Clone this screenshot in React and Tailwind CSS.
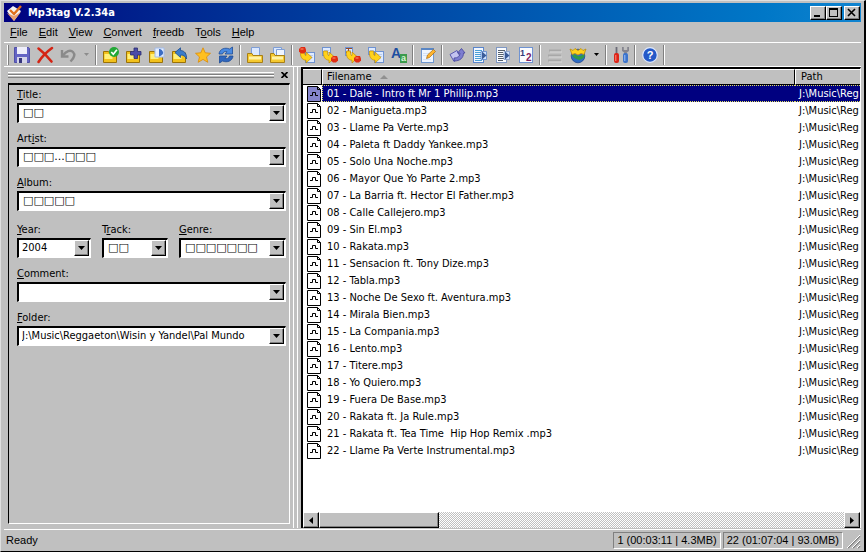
import React from 'react';

const tracks = [
  '01 - Dale - Intro ft Mr 1 Phillip.mp3',
  '02 - Manigueta.mp3',
  '03 - Llame Pa Verte.mp3',
  '04 - Paleta ft Daddy Yankee.mp3',
  '05 - Solo Una Noche.mp3',
  '06 - Mayor Que Yo Parte 2.mp3',
  '07 - La Barria ft. Hector El Father.mp3',
  '08 - Calle Callejero.mp3',
  '09 - Sin El.mp3',
  '10 - Rakata.mp3',
  '11 - Sensacion ft. Tony Dize.mp3',
  '12 - Tabla.mp3',
  '13 - Noche De Sexo ft. Aventura.mp3',
  '14 - Mirala Bien.mp3',
  '15 - La Compania.mp3',
  '16 - Lento.mp3',
  '17 - Titere.mp3',
  '18 - Yo Quiero.mp3',
  '19 - Fuera De Base.mp3',
  '20 - Rakata ft. Ja Rule.mp3',
  '21 - Rakata ft. Tea Time  Hip Hop Remix .mp3',
  '22 - Llame Pa Verte Instrumental.mp3',
];

// [before, underlined letter, after]
const menus = [
  ['', 'F', 'ile'],
  ['', 'E', 'dit'],
  ['', 'V', 'iew'],
  ['', 'C', 'onvert'],
  ['', 'f', 'reedb'],
  ['T', 'o', 'ols'],
  ['', 'H', 'elp'],
];

const Folder = () => (
  <>
    <path d="M.5 4.500h5l1 1.500h7v9.500H.5z" fill="#f2c11c" stroke="#9a7208" />
    <path d="M1.500 7h8v5h-8z" fill="#fff07a" />
  </>
);

const Page = ({ x = 6, y = 5, w = 9, h = 10 }) => (
  <>
    <rect x={x + 0.5} y={y + 0.5} width={w} height={h} fill="#dfebff" stroke="#6f93d2" />
    <path d={`M${x + 2} ${y + 3.5}h${w - 3}M${x + 2} ${y + 5.5}h${w - 3}`} stroke="#b7ccf0" />
  </>
);

const Tag = ({ x, y }) => (
  <>
    <path d={`M${x} ${y + 1}l2-2h4l1 2.500v2l-2 2h-3l-2-2z`} fill="#e02c14" />
    <path d={`M${x + 1.5} ${y + 1}h3`} stroke="#ff9a70" />
  </>
);

const Curve = () => (
  <path d="M1.500 4C1 10 3 13 7 13.200V16l6-5.500L7 5v3.500C5.800 8.300 5.300 7 5.500 4z" fill="#ffd21a" stroke="#c08a08" strokeWidth=".7" />
);

const icons = {
  save: (
    <>
      <path d="M.5.5h14l1 1v14H.5z" fill="#6464c4" stroke="#5050a8" />
      <path d="M3 0h10v7H3z" fill="#eeeefa" />
      <path d="M3 10h10v6H3z" fill="#d4d4e8" />
      <path d="M5 11h3v5H5z" fill="#36367e" />
    </>
  ),
  remove: (
    <path d="M1.500 1.500c4 3 9 8 13 13M15 1C9.500 5 5 9.500 1.500 15" fill="none" stroke="#d42414" strokeWidth="2.600" strokeLinecap="round" />
  ),
  undo: (
    <>
      <path d="M2 3v6.500h6.500" fill="none" stroke="#8a8a8a" strokeWidth="2.400" />
      <path d="M3 8.500C6 4 10.500 2.500 13 5s1 6-2.500 9.500" fill="none" stroke="#8a8a8a" strokeWidth="2.400" />
    </>
  ),
  folderCheck: (
    <>
      <Folder />
      <circle cx="11" cy="5" r="5" fill="#22a836" />
      <path d="M8.300 5l2 2.200 3.600-4.400" fill="none" stroke="#fff" strokeWidth="1.700" />
    </>
  ),
  folderAdd: (
    <>
      <Folder />
      <path d="M8 1h3.500v3.500H15V8h-3.500v3.500H8V8H4.500V4.500H8z" fill="#4a4ca8" stroke="#2a2c70" strokeWidth=".8" />
    </>
  ),
  folderPlay: (
    <>
      <Folder />
      <path d="M6 1h9v9H6z" fill="#e4eeff" stroke="#a3bbe8" />
      <path d="M10 2v7.500c3.500-1 4.500-3 4-4.500S12.500 2 10 2z" fill="#3a6cc4" />
    </>
  ),
  folderUp: (
    <>
      <Folder />
      <path d="M3 5.500L8.500.8v2.700c4 0 6.500 3.500 6 8.500-1.500-3-3-4-6-4v2.500z" fill="#3b7cc9" stroke="#1d4d90" strokeWidth=".8" />
    </>
  ),
  star: (
    <path d="M8 .8l2.200 5 5.300.5-4 3.600 1.300 5.400L8 12.400l-4.800 2.900 1.300-5.400-4-3.600 5.300-.5z" fill="#ffc020" stroke="#dc9010" strokeWidth=".9" />
  ),
  refresh: (
    <>
      <path d="M1 7C1.500 2 7 0 11.500 2L14.500 0v7H7l2-2.300C7 4 5 5 4.500 7z" fill="#4a8ae0" stroke="#1c4b98" strokeWidth=".8" />
      <path d="M15 9c-.5 5-6 7-10.500 5l-3 2V9H9l-2 2.300c2 .7 4 0 4.500-2.300z" fill="#2f66bd" stroke="#1c4b98" strokeWidth=".8" />
    </>
  ),
  openFile: (
    <>
      <path d="M4.500.5h8v8h-8z" fill="#dce9ff" stroke="#7f9fd6" />
      <path d="M.5 6.500H5l1 2h9.500v7H.5z" fill="#f5c930" stroke="#a97f14" />
      <path d="M2 9.500h12v3H2z" fill="#fff2a6" />
    </>
  ),
  openFiles: (
    <>
      <path d="M3.500.5h8v8h-8z" fill="#dce9ff" stroke="#7f9fd6" />
      <path d="M6.500 2.500h8v8h-8z" fill="#eef4ff" stroke="#7f9fd6" />
      <path d="M.5 6.500H4l1 2h9.500v7H.5z" fill="#f5c930" stroke="#a97f14" />
      <path d="M2 9.500h11v3H2z" fill="#fff2a6" />
    </>
  ),
  tagToFile: (
    <>
      <Page />
      <Curve />
      <Tag x={0} y={1} />
    </>
  ),
  fileToTag: (
    <>
      <Page x={0} y={0} w={8} h={8} />
      <Curve />
      <Tag x={9} y={10} />
    </>
  ),
  textToTag: (
    <>
      <Page x={0} y={0} w={7} h={8} />
      <path d="M1 1.500h6M3.500 2v3M1 5.500h5" stroke="#9a4a20" />
      <Curve />
      <Tag x={9} y={10} />
    </>
  ),
  fileToFile: (
    <>
      <Page x={0} y={0} w={7} h={7} />
      <Page x={6} y={4} w={9} h={11} />
      <Curve />
    </>
  ),
  letters: (
    <>
      <text x="0" y="11" fontSize="14" fontWeight="bold" fontFamily="Liberation Sans" fill="#1d4ea0">A</text>
      <rect x="9" y="7" width="7" height="9" fill="#3b9a4c" />
      <text x="10" y="14" fontSize="9" fontWeight="bold" fontFamily="Liberation Sans" fill="#d9f5d9">a</text>
    </>
  ),
  edit: (
    <>
      <rect x="1.500" y="1.500" width="12" height="14" fill="#eef5ff" stroke="#6f97d0" />
      <path d="M1 2h13" stroke="#5a86c4" strokeWidth="2" />
      <path d="M3 6.500h6M3 8.500h5M3 12.500h8" stroke="#d4e2f6" />
      <path d="M6.500 11.500l1-3.500 6-5.500 2 2-6 6z" fill="#ffb52e" stroke="#a86a10" strokeWidth=".7" />
    </>
  ),
  send: (
    <>
      <path d="M1 7.500l7-4 3 6-6 5z" fill="#c4c4f0" stroke="#5a5ab0" />
      <path d="M5 11c4 0 6-2 6-5H8.500L12.500 1.500 16 6h-1.500c0 5-3.500 8-9.500 8z" fill="#7d7dd0" stroke="#44449a" strokeWidth=".8" />
    </>
  ),
  export: (
    <>
      <rect x="1.500" y=".5" width="10" height="15" fill="#f2f7ff" stroke="#5b86cc" />
      <path d="M3 3.500h7M3 5.500h7M3 7.500h7M3 9.500h7M3 11.500h7M3 13.500h7" stroke="#4b9fd6" />
      <path d="M9 4.500h5.500v8H9z" fill="#cfe2ff" stroke="#5b86cc" strokeWidth=".8" />
      <path d="M10 4.500l4.500 4-4.500 4z" fill="#3a5c98" />
    </>
  ),
  exportPlain: (
    <>
      <rect x="1.500" y=".5" width="10" height="15" fill="#fafcff" stroke="#7f98c4" />
      <path d="M3 3.500h7M3 5.500h5M3 7.500h7M3 9.500h5M3 11.500h7M3 13.500h5" stroke="#55606e" />
      <path d="M9 4.500h5.500v8H9z" fill="#cfe2ff" stroke="#7f98c4" strokeWidth=".8" />
      <path d="M10 4.500l4.500 4-4.500 4z" fill="#3a5c98" />
    </>
  ),
  number: (
    <>
      <rect x="1.500" y=".5" width="13" height="15" fill="#fbfcff" stroke="#6f93d2" />
      <text x="2" y="9" fontSize="9" fontWeight="bold" fontFamily="Liberation Sans" fill="#333a78">1</text>
      <text x="8" y="14" fontSize="10" fontWeight="bold" fontFamily="Liberation Sans" fill="#802060">2</text>
    </>
  ),
  disabled: (
    <>
      <path d="M2 3.500h12M1 8.500h13M1 13.500h13" stroke="#a8a8a8" strokeWidth="2" />
      <path d="M3 5h12M2 10h13M2 15h13" stroke="#d8d8d8" />
    </>
  ),
  globe: (
    <>
      <circle cx="8" cy="9" r="6.800" fill="#2f6cc4" stroke="#1a3f86" strokeWidth=".7" />
      <path d="M2 8c2-1 4 0 6 1s4-2 6.500-1c0 3-2.500 4-5 5C6 12 3 11 2 8z" fill="#2f9a4a" />
      <path d="M0 2l3 1.500L5 1.500l3 2 3-2 2 2L16 2l-2 5.500-3-1-3 1.500-3-1.500-3 1z" fill="#ffd21a" stroke="#b88a10" strokeWidth=".8" />
    </>
  ),
  tools: (
    <>
      <path d="M3.500 0v7" stroke="#6c6c78" strokeWidth="1.800" />
      <rect x="1" y="6" width="5" height="10" rx="2" fill="#dd2418" />
      <path d="M2.800 8v6" stroke="#ff9080" />
      <path d="M9 0v4l2.200 1.500V7h2.600V5.500L16 4V0l-1.800 0v3h-3.400V0z" fill="#85858f" />
      <rect x="10" y="6" width="5" height="10" rx="2" fill="#3c74cc" />
      <path d="M11.800 8v6" stroke="#a0c4f8" />
    </>
  ),
  help: (
    <>
      <circle cx="8" cy="8" r="7.300" fill="#2459c8" stroke="#dfe8fa" strokeWidth="1.200" />
      <text x="8" y="12" fontSize="11" textAnchor="middle" fontWeight="bold" fontFamily="Liberation Sans" fill="#fff">?</text>
    </>
  ),
};

const toolbarGroups = [
  ['save', 'remove', 'undo', 'menuOff'],
  ['folderCheck', 'folderAdd', 'folderPlay', 'folderUp', 'star', 'refresh'],
  ['openFile', 'openFiles'],
  ['tagToFile', 'fileToTag', 'textToTag', 'fileToFile', 'letters'],
  ['edit'],
  ['send', 'export', 'exportPlain', 'number'],
  ['disabled', 'globe', 'menu'],
  ['tools'],
  ['help'],
];

const raised = 'bg-[#c0c0c0] border border-t-white border-l-white border-r-black border-b-black shadow-[inset_-1px_-1px_0_#808080]';

const ToolButton = ({ name }) => {
  if (name === 'menu' || name === 'menuOff') {
    return (
      <button aria-label={name} className="w-[14px] h-[22px] flex items-center justify-center">
        <svg width="5" height="3" viewBox="0 0 5 3">
          <path d="M0 0h5L2.500 3z" fill={name === 'menu' ? '#000' : '#8c8c8c'} />
        </svg>
      </button>
    );
  }
  return (
    <button aria-label={name} className="w-[23px] h-[22px] flex items-center justify-center">
      <svg width="16" height="16" viewBox="0 0 16 16" className="overflow-visible">{icons[name]}</svg>
    </button>
  );
};

const TitleBar = () => (
  <header className="flex items-center h-[19px] pl-[2px] pr-px bg-linear-to-r from-[#000080] to-[#1084d0]">
    <svg width="16" height="16" viewBox="0 0 16 16">
      <path d="M1 6l6-5 8 5-7 10z" fill="#f4f4f4" />
      <path d="M1 8l7 3 7-4-7 9z" fill="#e8a070" />
      <path d="M4 5l4 4 7-8" fill="none" stroke="#e0701c" strokeWidth="2.400" />
    </svg>
    <h1 className="ml-[6px] text-[11px] leading-4 font-bold text-white font-['DejaVu_Sans_Condensed','DejaVu_Sans',sans-serif]">Mp3tag V.2.34a</h1>
    <div className="ml-auto flex">
      <button aria-label="Minimize" className={`w-4 h-[14px] ${raised}`}>
        <svg width="14" height="12" viewBox="0 0 14 12"><path d="M3 8h6v2H3z" /></svg>
      </button>
      <button aria-label="Maximize" className={`w-4 h-[14px] ${raised}`}>
        <svg width="14" height="12" viewBox="0 0 14 12"><path d="M2 1h9v9H2zM3 3v6h7V3z" fillRule="evenodd" /></svg>
      </button>
      <button aria-label="Close" className={`ml-[2px] w-4 h-[14px] ${raised}`}>
        <svg width="14" height="12" viewBox="0 0 14 12"><path d="M3 2l7 7M10 2L3 9" stroke="#000" strokeWidth="1.600" /></svg>
      </button>
    </div>
  </header>
);

const Field = ({ id, label, value, className = '' }) => (
  <div className={`flex flex-col min-w-0 ${className}`}>
    <label htmlFor={id} className="h-4 leading-4">
      {label[0]}<u>{label[1]}</u>{label[2]}
    </label>
    <div className="relative h-5">
      <select
        id={id}
        defaultValue={value}
        className={`appearance-none block w-full h-5 pr-4 bg-white border-t-2 border-l-2 border-r border-b border-t-black border-l-black border-r-white border-b-white ${
          value.startsWith('□') ? "pl-1 font-['DejaVu_Sans',sans-serif]" : 'pl-[3px]'
        }`}
      >
        <option>{value}</option>
      </select>
      <span className={`absolute right-[2px] top-[2px] w-[15px] h-4 flex items-center justify-center pointer-events-none ${raised}`}>
        <svg width="7" height="4" viewBox="0 0 7 4"><path d="M0 0h7L3.500 4z" /></svg>
      </span>
    </div>
  </div>
);

const TagPanel = () => (
  <aside className="w-[290px] shrink-0 flex flex-col pl-1 pr-[3px] pb-1 border-r border-white">
    <div className="flex items-center h-4 gap-1">
      <div className="flex-1">
        <div className="h-[3px] border-t border-b border-t-white border-b-[#808080]" />
        <div className="h-[3px] border-t border-b border-t-white border-b-[#808080]" />
      </div>
      <button aria-label="Close panel" className="w-3 h-3 flex items-center justify-center">
        <svg width="7" height="6" viewBox="0 0 7 6"><path d="M.5 0l6 6M6.500 0l-6 6" stroke="#000" strokeWidth="1.700" /></svg>
      </button>
    </div>
    <form className="flex-1 flex flex-col gap-[11px] pt-[2px] pl-2 pr-[3px] border-t-2 border-l border-r border-b border-t-black border-l-black border-r-white border-b-white">
      <div className="flex flex-col gap-2">
        <Field id="title" label={['', 'T', 'itle:']} value="□□" />
        <Field id="artist" label={['Art', 'i', 'st:']} value="□□□...□□□" />
        <Field id="album" label={['', 'A', 'lbum:']} value="□□□□□" />
      </div>
      <div className="flex flex-col gap-2">
        <div className="flex gap-[11px]">
          <Field id="year" label={['', 'Y', 'ear:']} value="2004" className="w-[74px]" />
          <Field id="track" label={['T', 'r', 'ack:']} value="□□" className="w-[66px]" />
          <Field id="genre" label={['', 'G', 'enre:']} value="□□□□□□□" className="flex-1" />
        </div>
        <Field id="comment" label={['', 'C', 'omment:']} value="" />
        <Field id="folder" label={['', 'F', 'older:']} value="J:\Music\Reggaeton\Wisin y Yandel\Pal Mundo" />
      </div>
    </form>
  </aside>
);

const FileIcon = ({ selected }) => (
  <svg width="14" height="16" viewBox="0 0 14 16" className="block">
    <path d="M.5.5h10l3 3v12H.5z" fill={selected ? '#8484cc' : '#fff'} stroke="#000" />
    <path d="M10.500.5v3h3" fill="none" stroke="#000" />
    <path d="M3 9.500h2.500v-3h3v3H11" fill="none" stroke="#000" />
  </svg>
);

const FileList = () => (
  <main className="flex-1 min-w-0 flex flex-col bg-white border-t-2 border-l-2 border-r border-t-black border-l-black border-r-white">
    <div className="flex-1 min-h-0 overflow-hidden">
      <table className="w-full table-fixed border-separate border-spacing-0">
        <colgroup>
          <col className="w-[19px]" />
          <col />
          <col className="w-[65px]" />
        </colgroup>
        <thead>
          <tr className="h-4 text-left">
            <th className="p-0 bg-[#c0c0c0] border-t border-t-white border-b border-r border-black" />
            <th className="p-0 pl-1 font-normal bg-[#c0c0c0] border-t border-l border-t-white border-l-white border-b border-r border-black">
              <div className="flex items-center h-[14px] gap-2">
                Filename
                <svg width="8" height="4" viewBox="0 0 8 4"><path d="M4 0l4 4H0z" fill="#909090" /></svg>
              </div>
            </th>
            <th className="p-0 pl-[5px] font-normal bg-[#c0c0c0] border-t border-l border-t-white border-l-white border-b border-black leading-[14px]">Path</th>
          </tr>
        </thead>
        <tbody>
          {tracks.map((name, i) => (
            <tr key={name} className="h-[17px] leading-[15px] whitespace-pre">
              <td className="p-0 pl-1"><FileIcon selected={i === 0} /></td>
              <td className={i === 0 ? 'p-0 pl-1 bg-[#000080] text-white border-y border-l border-dotted border-[#e0e060]' : 'p-0 pl-[5px]'}>{name}</td>
              <td className={i === 0 ? 'p-0 pl-1 overflow-hidden bg-[#000080] text-white border-y border-dotted border-[#e0e060]' : 'p-0 pl-1 overflow-hidden'}>J:\Music\Reg</td>
            </tr>
          ))}
        </tbody>
      </table>
    </div>
    <div className="flex h-4 bg-[repeating-conic-gradient(#fff_0_25%,#c0c0c0_0_50%)] bg-[length:2px_2px]">
      <button aria-label="Scroll left" className={`w-4 h-4 flex items-center justify-center ${raised}`}>
        <svg width="4" height="7" viewBox="0 0 4 7"><path d="M4 0v7L0 3.500z" /></svg>
      </button>
      <div className={`w-[120px] h-4 ${raised}`} />
      <button aria-label="Scroll right" className={`ml-auto w-4 h-4 flex items-center justify-center ${raised}`}>
        <svg width="4" height="7" viewBox="0 0 4 7"><path d="M0 0v7l4-3.500z" /></svg>
      </button>
    </div>
  </main>
);

const StatusBar = () => (
  <footer className="flex items-center h-[22px] pl-[2px] gap-[2px] border-t border-white font-['Liberation_Sans',Arial,sans-serif]">
    <span className="flex-1">Ready</span>
    <span className="h-[17px] px-[3px] leading-[15px] border border-t-[#808080] border-l-[#808080] border-r-white border-b-white">1 (00:03:11 | 4.3MB)</span>
    <span className="h-[17px] px-[3px] leading-[15px] border border-t-[#808080] border-l-[#808080] border-r-white border-b-white">22 (01:07:04 | 93.0MB)</span>
    <svg width="16" height="16" viewBox="0 0 16 16">
      <path d="M3 15L15 3M8 15l7-7M13 15l2-2" stroke="#808080" strokeWidth="1.500" />
      <path d="M2 15L15 2M7 15l8-8M12 15l3-3" stroke="#fff" />
    </svg>
  </footer>
);

export default function App() {
  return (
    <div className="h-screen flex flex-col overflow-hidden pt-[2px] px-[3px] bg-[#c0c0c0] border-t border-l border-t-[#dfdfdf] border-l-[#dfdfdf] border-r-2 border-b border-r-black border-b-black text-[11px] text-black font-['DejaVu_Sans_Condensed','DejaVu_Sans',Tahoma,sans-serif]">
      <TitleBar />
      <nav className="flex items-center h-[20px] pl-[6px] gap-[11px] font-['Liberation_Sans',Arial,sans-serif]">
        {menus.map(([a, b, c]) => (
          <button key={b + c} className="leading-4">{a}<u>{b}</u>{c}</button>
        ))}
      </nav>
      <div className="flex items-center h-[25px] pl-[3px] border-t border-t-white border-b border-b-white">
        <span className="w-[2px] h-5 mr-px border-l border-r border-l-white border-r-[#808080]" />
        {toolbarGroups.map((group) => (
          <React.Fragment key={group[0]}>
            {group.map((name) => <ToolButton key={name} name={name} />)}
            <span className="w-[2px] h-5 mx-[2px] border-l border-r border-l-[#808080] border-r-white" />
          </React.Fragment>
        ))}
      </div>
      <div className="flex-1 min-h-0 flex gap-[3px] pb-px">
        <TagPanel />
        <div className="flex-1 min-w-0 flex pl-[3px] border-l border-white">
          <FileList />
        </div>
      </div>
      <StatusBar />
    </div>
  );
}
